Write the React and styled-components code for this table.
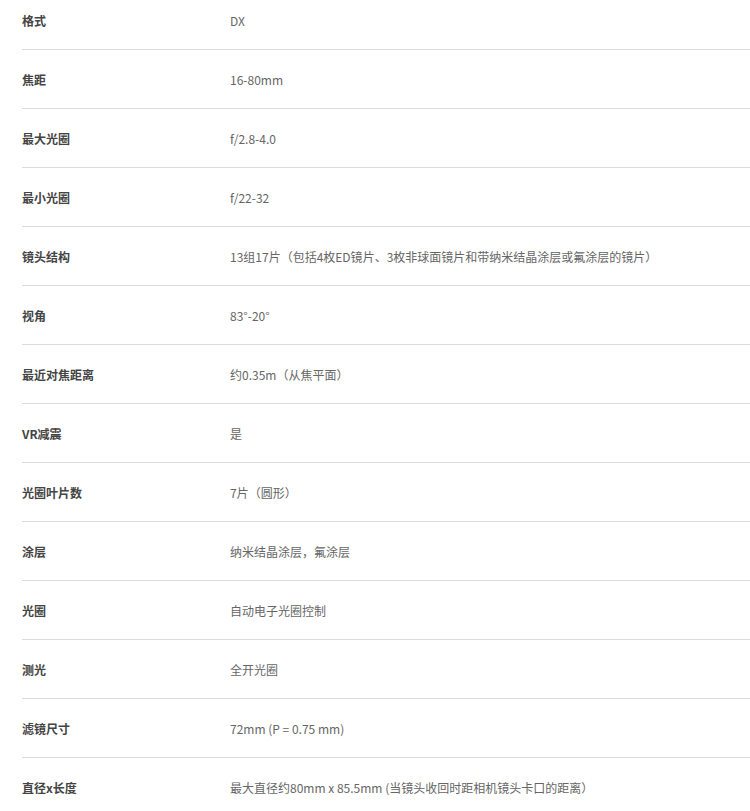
import React from 'react'
import styled, { createGlobalStyle } from 'styled-components'

const Global = createGlobalStyle`
body {
    margin:0;
    background:#fff;
    font-family:"Noto Sans CJK SC", "Noto Sans", sans-serif;
}
`

const SpecList = styled.div`
margin-top:-9px;
padding-left:22px;
`

const SpecRow = styled.div`
display:grid;
grid-template-columns:208px 1fr;
align-items:center;
height:59px;
padding-top:1px;
box-sizing:border-box;
border-bottom:1px solid #dcdcdc;
font-size:12px;
`

const Label = styled.div`
font-weight:bold;
color:#444;
`

const Value = styled.div`
color:#666;
white-space:nowrap;
`

const specs = [
    ['格式', 'DX'],
    ['焦距', '16-80mm'],
    ['最大光圈', 'f/2.8-4.0'],
    ['最小光圈', 'f/22-32'],
    ['镜头结构', '13组17片（包括4枚ED镜片、3枚非球面镜片和带纳米结晶涂层或氟涂层的镜片）'],
    ['视角', '83°-20°'],
    ['最近对焦距离', '约0.35m（从焦平面）'],
    ['VR减震', '是'],
    ['光圈叶片数', '7片（圆形）'],
    ['涂层', '纳米结晶涂层，氟涂层'],
    ['光圈', '自动电子光圈控制'],
    ['测光', '全开光圈'],
    ['滤镜尺寸', '72mm (P = 0.75 mm)'],
    ['直径x长度', '最大直径约80mm x 85.5mm (当镜头收回时距相机镜头卡口的距离）'],
]

function App() {
    return (
        <>
            <Global />
            <SpecList>
                {specs.map(([label, value]) => (
                    <SpecRow key={label}>
                        <Label>{label}</Label>
                        <Value>{value}</Value>
                    </SpecRow>
                ))}
            </SpecList>
        </>
    )
}

export default App
